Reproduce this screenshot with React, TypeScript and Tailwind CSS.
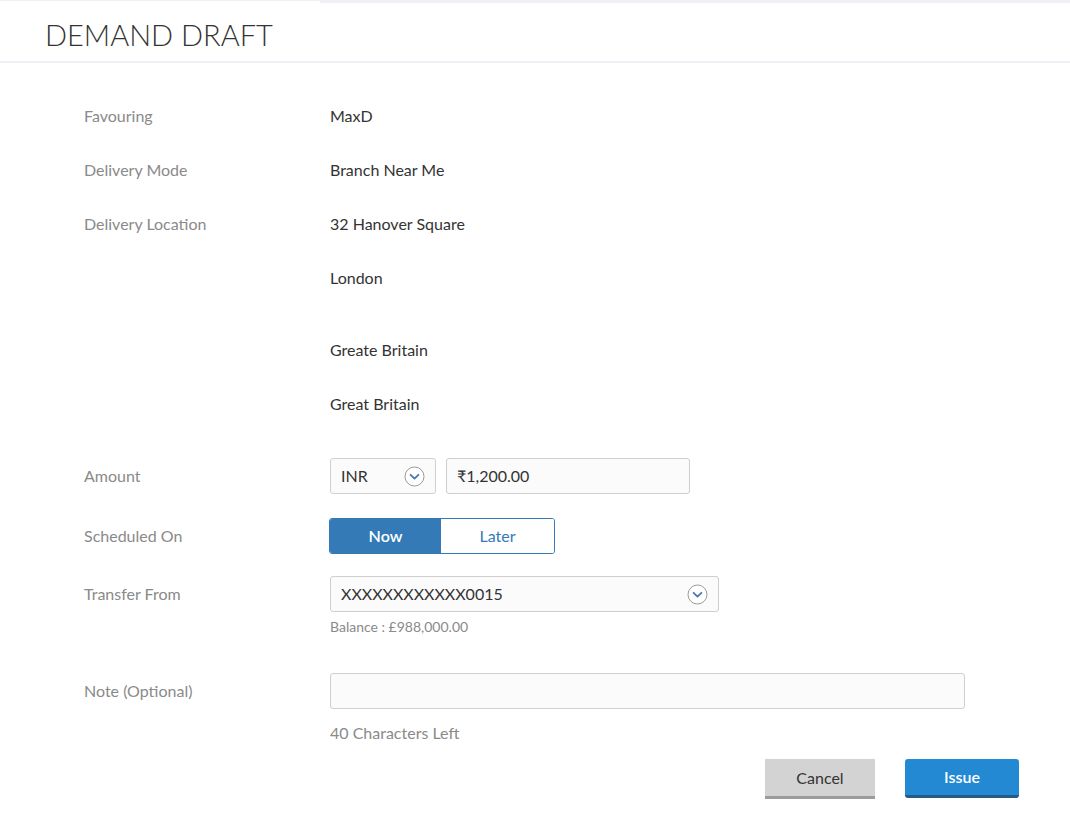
import React from "react";

const Chevron = () => (
  <svg width="21" height="21" viewBox="0 0 21 21" className="shrink-0">
    <circle cx="10.5" cy="10.5" r="9.5" fill="white" stroke="#9a9a9a" strokeWidth="1" />
    <path d="M6.6 8.8 L10.5 12.6 L14.4 8.8" fill="none" stroke="#4a7bb0" strokeWidth="1.8" strokeLinecap="round" strokeLinejoin="round" />
  </svg>
);

const Row = ({ label, children }: { label: string; children: React.ReactNode }) => (
  <div className="flex items-center h-[54px]">
    <div className="w-[246px] shrink-0 text-[#8a8a8a]">{label}</div>
    <div className="text-[#333]">{children}</div>
  </div>
);

const App = () => {
  return (
    <div className="w-[1070px] h-[824px] bg-white text-[16px] overflow-hidden" style={{ fontFamily: "Lato, 'Open Sans', sans-serif" }}>
      <div className="flex">
        <div className="w-[320px] h-px bg-[#eef0f5]"></div>
        <div className="flex-1 h-[3px] bg-[#eef0f5]"></div>
      </div>
      <div className="h-[58px] box-content border-b-2 border-[#eef0f5] pl-[45px] flex items-center">
        <h1 className="text-[29px] font-light text-[#333] leading-none pt-[4px]">DEMAND DRAFT</h1>
      </div>

      <div className="pl-[84px] pt-[26px]">
        <Row label="Favouring">MaxD</Row>
        <Row label="Delivery Mode">Branch Near Me</Row>
        <div className="flex">
          <div className="w-[246px] shrink-0 h-[54px] flex items-center text-[#8a8a8a]">Delivery Location</div>
          <div className="flex flex-col text-[#333]">
            <div className="h-[54px] flex items-center">32 Hanover Square</div>
            <div className="h-[54px] flex items-center">London</div>
            <div className="h-[18px]"></div>
            <div className="h-[54px] flex items-center">Greate Britain</div>
            <div className="h-[54px] flex items-center">Great Britain</div>
          </div>
        </div>

        <div className="flex items-center mt-[27px] h-[36px]">
          <div className="w-[246px] shrink-0 text-[#8a8a8a]">Amount</div>
          <div className="flex gap-[10px]">
            <div className="w-[106px] h-[36px] border border-[#cfcfcf] rounded-[3px] bg-[#fbfbfb] flex items-center justify-between pl-[10px] pr-[10px] text-[#333]">
              <span>INR</span>
              <Chevron />
            </div>
            <div className="w-[244px] h-[36px] border border-[#cfcfcf] rounded-[3px] bg-[#fbfbfb] flex items-center pl-[10px] text-[#333]">
              ₹1,200.00
            </div>
          </div>
        </div>

        <div className="flex items-center mt-[24px] h-[36px]">
          <div className="w-[245px] shrink-0 text-[#8a8a8a]">Scheduled On</div>
          <div className="flex w-[226px] h-[36px] border border-[#337ab7] rounded-[3px] overflow-hidden">
            <div className="w-[111px] bg-[#337ab7] text-white font-semibold flex items-center justify-center">Now</div>
            <div className="flex-1 bg-white text-[#337ab7] flex items-center justify-center">Later</div>
          </div>
        </div>

        <div className="flex mt-[22px]">
          <div className="w-[246px] shrink-0 h-[36px] flex items-center text-[#8a8a8a]">Transfer From</div>
          <div className="flex flex-col">
            <div className="w-[389px] h-[36px] border border-[#cfcfcf] rounded-[3px] bg-[#fbfbfb] flex items-center justify-between pl-[10px] pr-[10px] text-[#333]">
              <span>XXXXXXXXXXXX0015</span>
              <Chevron />
            </div>
            <div className="text-[14px] text-[#8a8a8a] mt-[7px] leading-[16px]">Balance : £988,000.00</div>
          </div>
        </div>

        <div className="flex mt-[38px]">
          <div className="w-[246px] shrink-0 h-[36px] flex items-center text-[#8a8a8a]">Note (Optional)</div>
          <div className="flex flex-col">
            <div className="w-[635px] h-[36px] border border-[#cfcfcf] rounded-[3px] bg-[#fbfbfb]"></div>
            <div className="text-[#8a8a8a] mt-[15px] leading-[18px]">40 Characters Left</div>
          </div>
        </div>

        <div className="flex justify-end gap-[30px] pr-[51px] mt-[17px]">
          <button className="w-[110px] h-[40px] bg-[#d3d3d4] border-b-[3px] border-[#9b9b9b] text-[#333] text-[16px]">Cancel</button>
          <button className="w-[114px] h-[39px] bg-[#2389d3] border-b-[3px] border-[#265a87] rounded-[3px] text-white font-semibold text-[16px]">Issue</button>
        </div>
      </div>
    </div>
  );
};

export default App;
